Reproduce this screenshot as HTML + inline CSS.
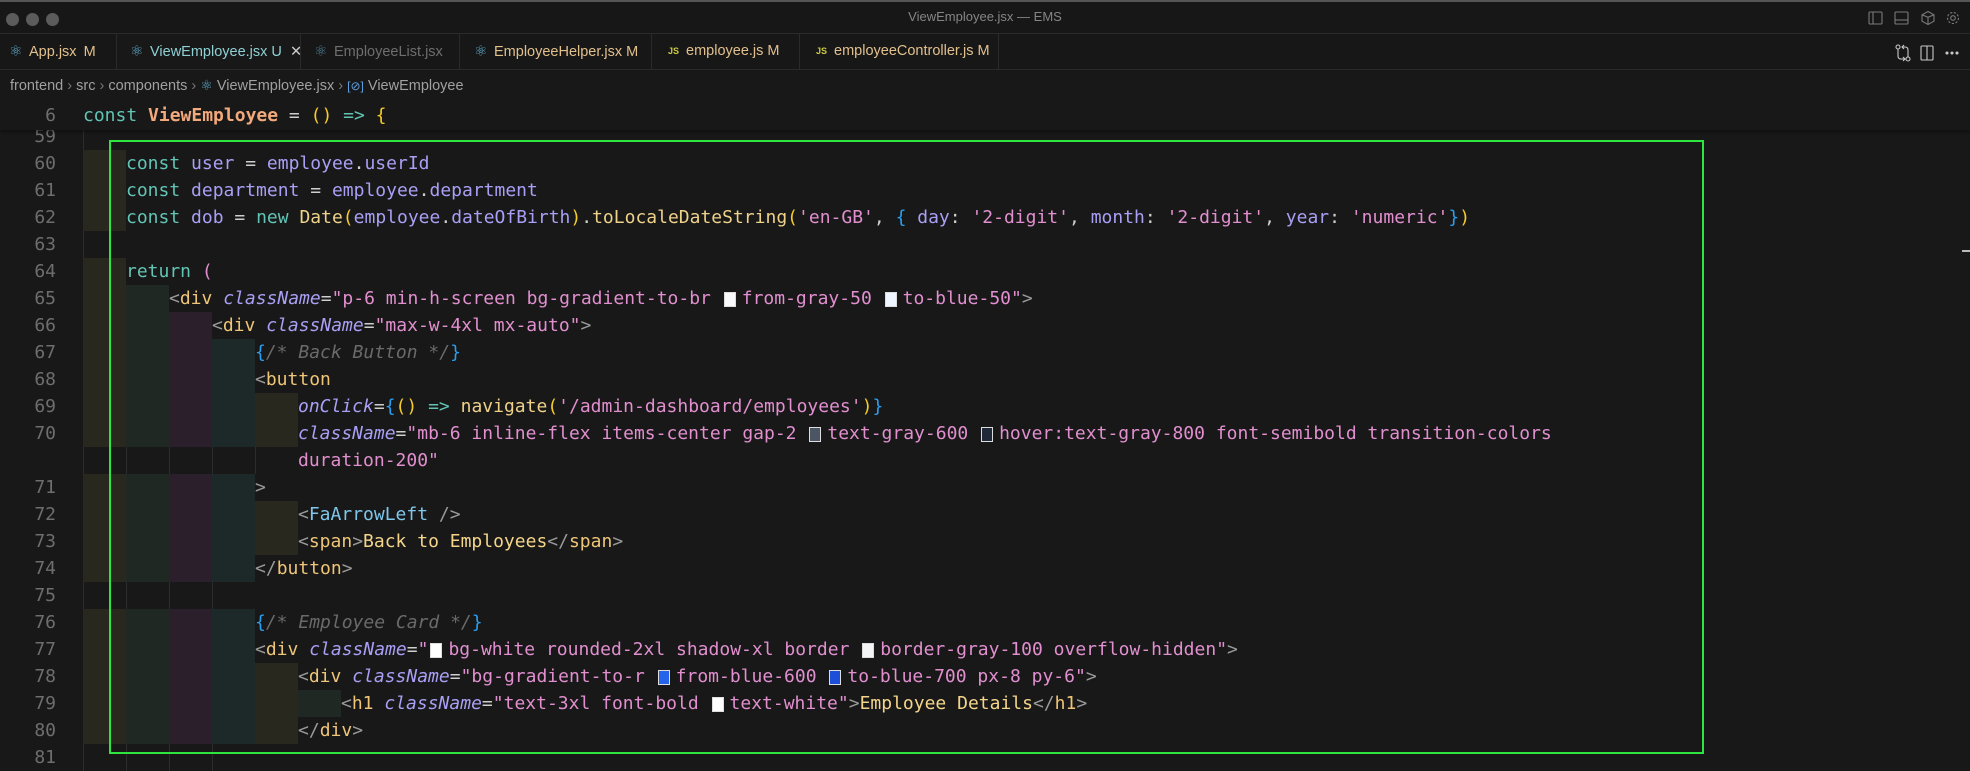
<!DOCTYPE html>
<html><head><meta charset="utf-8"><style>
*{margin:0;padding:0;box-sizing:border-box}
body{width:1970px;height:769px;background:#181818;overflow:hidden;position:relative;font-family:"Liberation Sans",sans-serif}
.abs{position:absolute}
#title{left:0;top:0;width:1970px;height:34px;background:#171717;border-top:2px solid #555;border-bottom:1px solid #2a2a2a}
.dot{position:absolute;top:11px;width:13px;height:13px;border-radius:50%;background:#5b5b5b}
#tabs{left:0;top:34px;width:1970px;height:36px;background:#171717;border-bottom:1px solid #2a2a2a}
.tab{position:absolute;top:0;height:35px;border-right:1px solid #2a2a2a;font-size:14.5px;line-height:35px;white-space:nowrap;padding-left:9px;overflow:hidden}
.ri{display:inline-block;width:15px;font-size:15px;color:#5fa9c8;margin-right:5px}
.js{display:inline-block;font-size:9px;font-weight:bold;color:#cbcb41;margin-right:7px;vertical-align:1px}
#bc{left:10px;top:77px;font-size:14.5px;color:#a0a0a0;white-space:nowrap}
.code{font-family:"DejaVu Sans Mono","Liberation Mono",monospace;font-size:18px}
.row{position:absolute;left:0;height:27px;width:1970px}
.ln{position:absolute;right:calc(1970px - 56px);top:0;line-height:27px;color:#6e6e6e;text-align:right}
.tx{position:absolute;left:83px;top:0;line-height:27px;white-space:pre;color:#d4d4d4}
.band{position:absolute;top:0;height:27px;width:43px}
.g{position:absolute;top:0;height:27px;width:1px;background:#2c2c2c}
.k{color:#62c4b4}.v{color:#a99ff5}.s{color:#e18fcf}.t{color:#efc577}.a{color:#a99ff5;font-style:italic}
.p{color:#9a9a9a}.c{color:#6a6a6a;font-style:italic}.b{color:#2a9ff0}.y{color:#f5cc2a}.fn{color:#f2a97c;font-weight:bold}
.cmp{color:#7ec6ea}.x{color:#f5d58a}.w{color:#cfcfcf}.f{color:#eed28a}
.sw{display:inline-block;width:12px;height:15px;border:1px solid #ddd;margin:0 6px -1px 2px;vertical-align:-2px}
</style></head><body>
<div id="title" class="abs">
 <div class="dot" style="left:6px"></div><div class="dot" style="left:26px"></div><div class="dot" style="left:46px"></div>
 <div class="abs" style="left:0;width:1970px;top:7px;text-align:center;font-size:13px;color:#858585">ViewEmployee.jsx — EMS</div>
 <svg class="abs" style="left:1868px;top:8px" width="95" height="16" viewBox="0 0 95 16" fill="none" stroke="#7a7a7a" stroke-width="1.1">
  <rect x="1" y="2" width="13" height="12" rx="1"/><line x1="5" y1="2" x2="5" y2="14"/>
  <rect x="27" y="2" width="13" height="12" rx="1"/><line x1="27" y1="10" x2="40" y2="10"/>
  <path d="M60 1.5l6 3.3v6.4l-6 3.3-6-3.3V4.8zM54 4.8l6 2.5 6-2.5M60 7.3v7"/>
  <circle cx="85" cy="8" r="2.3"/><circle cx="85" cy="8" r="5.5" stroke-dasharray="2.2 1.6"/>
 </svg>
</div>
<div id="tabs" class="abs">
 <div class="tab" style="left:0;width:117px;color:#e2c08d"><span class="ri">⚛</span>App.jsx <span style="margin-left:3px">M</span></div>
 <div class="tab" style="left:117px;width:184px;color:#8fd0d4;background:#181818;padding-left:13px"><span class="ri">⚛</span>ViewEmployee.jsx U <span style="color:#ccc;margin-left:4px">✕</span></div>
 <div class="tab" style="left:301px;width:159px;color:#6e6e6e;padding-left:13px"><span class="ri" style="color:#4f7f94">⚛</span>EmployeeList.jsx</div>
 <div class="tab" style="left:460px;width:192px;color:#e2c08d;padding-left:14px"><span class="ri">⚛</span>EmployeeHelper.jsx M</div>
 <div class="tab" style="left:652px;width:148px;color:#e2c08d;padding-left:16px"><span class="js">JS</span>employee.js M</div>
 <div class="tab" style="left:800px;width:199px;color:#e2c08d;padding-left:16px"><span class="js">JS</span>employeeController.js M</div>
 <svg class="abs" style="left:1895px;top:10px" width="75" height="18" viewBox="0 0 75 18" fill="none" stroke="#c8c8c8" stroke-width="1.1">
  <circle cx="3" cy="3" r="2"/><circle cx="13" cy="15" r="2"/><path d="M3 5v7c0 2 1 3 3 3h4M13 13V6c0-2-1-3-3-3H7M9 1l-2 2 2 2M8 13l2 2-2 2"/>
  <rect x="26" y="2" width="12" height="14" rx="1"/><line x1="32" y1="2" x2="32" y2="16"/>
  <circle cx="52" cy="9" r="1" fill="#c8c8c8"/><circle cx="57" cy="9" r="1" fill="#c8c8c8"/><circle cx="62" cy="9" r="1" fill="#c8c8c8"/>
 </svg>
</div>
<div id="bc" class="abs">frontend <span style="color:#777">›</span> src <span style="color:#777">›</span> components <span style="color:#777">›</span> <span style="color:#5fa9c8;font-size:14px">⚛</span> ViewEmployee.jsx <span style="color:#777">›</span> <span style="color:#5fa0e0;font-size:12px">[⊘]</span> ViewEmployee</div>

<div class="code">
<div class="row" style="top:123px"><div class="ln">59</div><div class="g" style="left:83px"></div></div>
<div class="row" style="top:102px;height:28px;background:#181818;box-shadow:0 2px 3px rgba(0,0,0,.35)"><div class="ln">6</div><div class="tx"><span class="k">const</span> <span class="fn">ViewEmployee</span> <span class="w">=</span> <span class="y">()</span> <span class="k">=&gt;</span> <span class="y">{</span></div></div>
<div id="rows"></div>
</div>
<div class="abs" style="left:109px;top:140px;width:1595px;height:614px;border:2px solid #2ee43e"></div>
<div class="abs" style="left:1962px;top:250px;width:8px;height:2px;background:#bbb"></div>
<script>
var C=['#28281f','#1f2822','#2a1f2b','#1d2929'];
var R=[
['60',1,'<span class="k">const</span> <span class="v">user</span> <span class="w">=</span> <span class="v">employee</span><span class="w">.</span><span class="v">userId</span>'],
['61',1,'<span class="k">const</span> <span class="v">department</span> <span class="w">=</span> <span class="v">employee</span><span class="w">.</span><span class="v">department</span>'],
['62',1,'<span class="k">const</span> <span class="v">dob</span> <span class="w">=</span> <span class="k">new</span> <span class="f">Date</span><span class="y">(</span><span class="v">employee</span><span class="w">.</span><span class="v">dateOfBirth</span><span class="y">)</span><span class="w">.</span><span class="f">toLocaleDateString</span><span class="y">(</span><span class="s">\'en-GB\'</span><span class="w">, </span><span class="b">{</span> <span class="v">day</span><span class="w">:</span> <span class="s">\'2-digit\'</span><span class="w">,</span> <span class="v">month</span><span class="w">:</span> <span class="s">\'2-digit\'</span><span class="w">,</span> <span class="v">year</span><span class="w">:</span> <span class="s">\'numeric\'</span><span class="b">}</span><span class="y">)</span>'],
['63',-1,''],
['64',1,'<span class="k">return</span> <span class="s">(</span>'],
['65',2,'<span class="p">&lt;</span><span class="t">div</span> <span class="a">className</span><span class="w">=</span><span class="s">"p-6 min-h-screen bg-gradient-to-br <span class="sw" style="background:#f9fafb"></span>from-gray-50 <span class="sw" style="background:#eff6ff"></span>to-blue-50"</span><span class="p">&gt;</span>'],
['66',3,'<span class="p">&lt;</span><span class="t">div</span> <span class="a">className</span><span class="w">=</span><span class="s">"max-w-4xl mx-auto"</span><span class="p">&gt;</span>'],
['67',4,'<span class="b">{</span><span class="c">/* Back Button */</span><span class="b">}</span>'],
['68',4,'<span class="p">&lt;</span><span class="t">button</span>'],
['69',5,'<span class="a">onClick</span><span class="w">=</span><span class="b">{</span><span class="y">()</span> <span class="k">=&gt;</span> <span class="f">navigate</span><span class="y">(</span><span class="s">\'/admin-dashboard/employees\'</span><span class="y">)</span><span class="b">}</span>'],
['70',5,'<span class="a">className</span><span class="w">=</span><span class="s">"mb-6 inline-flex items-center gap-2 <span class="sw" style="background:#4b5563"></span>text-gray-600 <span class="sw" style="background:#1f2937"></span>hover:text-gray-800 font-semibold transition-colors</span>'],
['',-5,'<span class="s">duration-200"</span>'],
['71',4,'<span class="p">&gt;</span>'],
['72',5,'<span class="p">&lt;</span><span class="cmp">FaArrowLeft</span> <span class="p">/&gt;</span>'],
['73',5,'<span class="p">&lt;</span><span class="t">span</span><span class="p">&gt;</span><span class="x">Back to Employees</span><span class="p">&lt;/</span><span class="t">span</span><span class="p">&gt;</span>'],
['74',4,'<span class="p">&lt;/</span><span class="t">button</span><span class="p">&gt;</span>'],
['75',-4,''],
['76',4,'<span class="b">{</span><span class="c">/* Employee Card */</span><span class="b">}</span>'],
['77',4,'<span class="p">&lt;</span><span class="t">div</span> <span class="a">className</span><span class="w">=</span><span class="s">"<span class="sw" style="background:#fff"></span>bg-white rounded-2xl shadow-xl border <span class="sw" style="background:#f3f4f6"></span>border-gray-100 overflow-hidden"</span><span class="p">&gt;</span>'],
['78',5,'<span class="p">&lt;</span><span class="t">div</span> <span class="a">className</span><span class="w">=</span><span class="s">"bg-gradient-to-r <span class="sw" style="background:#2563eb"></span>from-blue-600 <span class="sw" style="background:#1d4ed8"></span>to-blue-700 px-8 py-6"</span><span class="p">&gt;</span>'],
['79',6,'<span class="p">&lt;</span><span class="t">h1</span> <span class="a">className</span><span class="w">=</span><span class="s">"text-3xl font-bold <span class="sw" style="background:#fff"></span>text-white"</span><span class="p">&gt;</span><span class="x">Employee Details</span><span class="p">&lt;/</span><span class="t">h1</span><span class="p">&gt;</span>'],
['80',5,'<span class="p">&lt;/</span><span class="t">div</span><span class="p">&gt;</span>'],
['81',-4,'']
];
var h='';
R.forEach(function(r,k){
 var top=150+27*k, ind=r[1], s='<div class="row" style="top:'+top+'px"><div class="ln">'+r[0]+'</div>';
 if(ind>0){for(var i=0;i<ind;i++)s+='<div class="band" style="left:'+(83+43*i)+'px;background:'+C[i%4]+'"></div>';}
 else {var n=-ind;if(ind==-1)n=1;for(var i=0;i<n;i++)s+='<div class="g" style="left:'+(83+43*i)+'px"></div>';}
 var lvl=ind>0?ind:(ind==-5?5:0);
 s+='<div class="tx" style="left:'+(83+43*lvl)+'px">'+r[2]+'</div></div>';
 h+=s;
});
document.getElementById('rows').innerHTML=h;
</script>
</body></html>
